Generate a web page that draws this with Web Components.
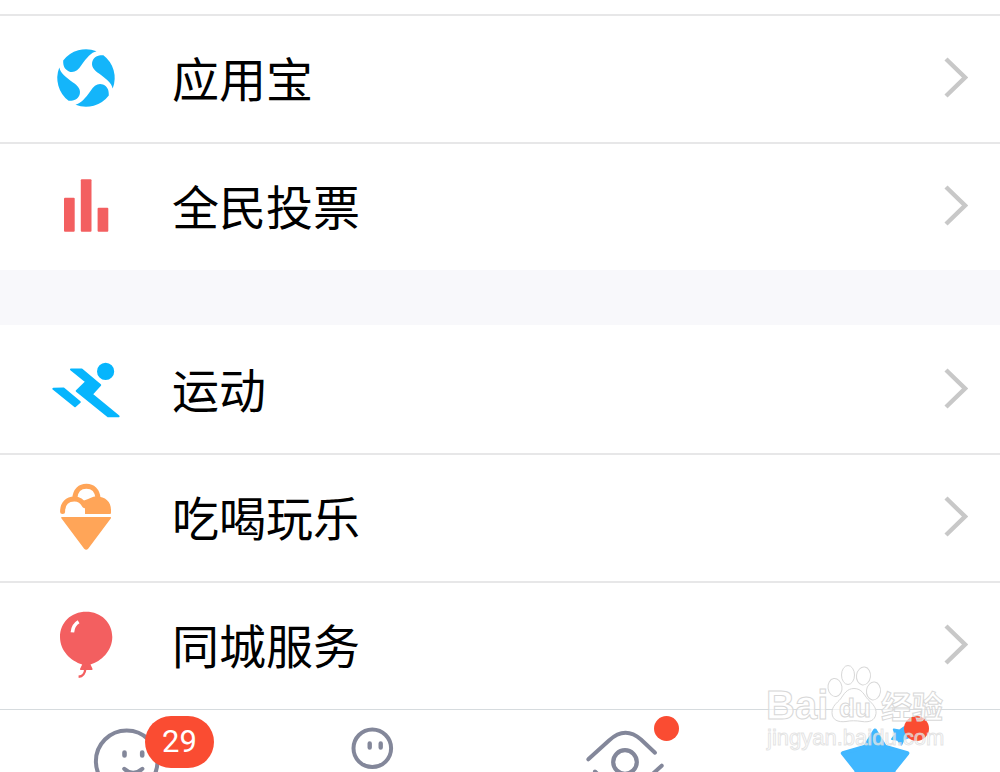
<!DOCTYPE html>
<html lang="zh-CN">
<head>
<meta charset="utf-8">
<meta name="viewport" content="width=device-width, initial-scale=1">
<title>动态</title>
<style>
  body {
    margin: 0;
    background: #fff;
    font-family: "Noto Sans CJK SC", sans-serif;
    color: #000;
  }
</style>
</head>
<body>
<feed-page>
  <menu-group>
    <menu-row>
      <svg slot="icon" viewBox="0 0 72 72" fill="#14b5fa">
        <defs><path id="blade" d="M-22.8 -17.4A28.7 28.7 0 0 1 10.5 -26.7C5 -25.5 1 -20.5 -4.5 -13C-8 -7.5 -12 -4.800 -17 -6.500C-21.500 -8.500 -23 -12 -22.800 -17.400Z"/></defs>
        <g transform="translate(36 36)">
          <use href="#blade"/>
          <use href="#blade" transform="rotate(90)"/>
          <use href="#blade" transform="rotate(180)"/>
          <use href="#blade" transform="rotate(270)"/>
        </g>
      </svg>
      应用宝
    </menu-row>
    <menu-row>
      <svg slot="icon" viewBox="0 0 72 72" fill="#f35f60">
        <rect x="14" y="27.7" width="10.7" height="34" rx="1"/>
        <rect x="30.8" y="9.3" width="10.7" height="52.4" rx="1"/>
        <rect x="47.6" y="37.7" width="10.7" height="24" rx="1"/>
      </svg>
      全民投票
    </menu-row>
  </menu-group>
  <menu-group>
    <menu-row>
      <svg slot="icon" viewBox="0 0 72 72" fill="#06b5fd" stroke="#06b5fd" stroke-width="2" stroke-linejoin="round">
        <circle cx="55.6" cy="18.4" r="7.6"/>
        <path d="M21 16.4H31.7L50.2 32.1L41.8 41.3L68.6 63.3H58L26.7 38L36.2 28.8Z"/>
        <path d="M3.3 35.8L13.6 35.4L29.8 49L25 53.3Z"/>
      </svg>
      运动
    </menu-row>
    <menu-row>
      <svg slot="icon" viewBox="0 0 72 72" fill="#ffa558">
        <path d="M12 36.7H60.3L37.5 67.2Q36.2 68.7 34.8 67.2Z" stroke="#ffa558" stroke-width="1.6" stroke-linejoin="round"/>
        <path d="M12.6 30.5C12.6 22.5 17.5 18 24.3 18C29 18 32.5 20.6 34.5 24.5" fill="none" stroke="#ffa558" stroke-width="5" stroke-linecap="round"/>
        <path d="M24.8 17C25.5 9.5 30 5.3 36.4 5.3C42.7 5.3 47.3 9.5 48 17" fill="none" stroke="#ffa558" stroke-width="5"/>
        <path d="M35 33V29C35 25.5 33.2 22.5 31.6 20.8C36 18.5 39 17.8 43.5 15.8C54 14.5 61 20 61 29V32Q61 33 60 33Z"/>
      </svg>
      吃喝玩乐
    </menu-row>
    <menu-row>
      <svg slot="icon" viewBox="0 0 72 72" fill="#f35f60">
        <path d="M36.2 2.7C51 2.7 62.3 13.5 62.3 28C62.3 42 51 52.5 40.5 55.5L42.6 60Q42.8 61 41.5 61H31Q29.7 61 30 60L32.2 55.5C21 52 10 42 10 28C10 13.5 21 2.7 36.2 2.7Z"/>
        <path d="M35.4 59.5C35 64.5 33 67.5 28.6 67.8" fill="none" stroke="#f35f60" stroke-width="2.4"/>
        <path d="M22.4 23.3C22.8 18.5 24.8 15 28.6 12.8" fill="none" stroke="#fff" stroke-width="3.6"/>
      </svg>
      同城服务
    </menu-row>
  </menu-group>

  <tab-bar slot="tabs">
    <tab-item label="消息" badge="29">
      <svg viewBox="0 0 120 100">
        <circle cx="61.7" cy="51.3" r="30.8"/>
        <path d="M59.5 42.5V45.5M77.2 42.5V45.5" stroke-width="4.6"/>
        <path d="M59.2 58.8Q68 67 77.4 58.8"/>
      </svg>
    </tab-item>
    <tab-item label="联系人">
      <svg viewBox="0 0 120 100">
        <circle cx="57.3" cy="38.3" r="18.8"/>
        <path d="M54.7 33.5V37.5M65.7 33.5V37.5" stroke-width="4.4"/>
      </svg>
    </tab-item>
    <tab-item label="看点" dot>
      <svg viewBox="0 0 120 100">
        <path d="M23.3 49.3L44 30.5Q60 15.5 76 29.5L90 42.7"/>
        <path d="M96.7 55.7L76 74.5Q60 89.5 44 75L30 61.5"/>
        <circle cx="60" cy="52" r="11.8" stroke-width="4.2"/>
      </svg>
    </tab-item>
    <tab-item label="动态" dot>
      <svg viewBox="0 0 120 100">
        <g fill="#40b7ff" stroke="#40b7ff" stroke-width="4" stroke-linejoin="round">
          <path d="M60 20.5L69.8 36.6L92.4 43.2L78.5 60.5L80 82L60 74L40 82L41.5 60.5L27.8 43.2L50.2 36.6Z"/>
          <path stroke-width="2" d="M78.8 19.5L84.5 20.5L89.5 17L89.7 23L94.5 27L88.7 29L86.3 34.5L82.7 29.7L77 29L80.5 24.5Z"/>
        </g>
      </svg>
    </tab-item>
  </tab-bar>

  <site-mark slot="mark"></site-mark>
</feed-page>

<script>
class FeedPage extends HTMLElement {
  constructor() {
    super();

    this.attachShadow({ mode: "open" });

    this.shadowRoot.innerHTML = `
        <style>
          :host {
            position: relative;
            display: flex;
            flex-direction: column;
            height: 100vh;
            overflow: hidden;
          }

          main {
            display: flex;
            flex-direction: column;
            gap: 55px;
            padding-top: 14px;
            background: linear-gradient(#fff 14px, #f8f8fb 14px);
          }
        </style>
        <main><slot></slot></main>
        <slot name="tabs"></slot>
        <slot name="mark"></slot>
      `;
  }
}

class MenuGroup extends HTMLElement {
  constructor() {
    super();

    this.attachShadow({ mode: "open" });

    this.shadowRoot.innerHTML = `
        <style>
          :host {
            display: block;
            background: #fff;
          }

          ::slotted(menu-row) {
            border-top: 2px solid #e7e7e8;
          }

          :host(:not(:first-of-type)) ::slotted(menu-row:first-child) {
            border-top-color: transparent;
          }
        </style>
        <slot></slot>
      `;
  }
}

class MenuRow extends HTMLElement {
  constructor() {
    super();

    this.attachShadow({ mode: "open" });

    this.shadowRoot.innerHTML = `
        <style>
          :host {
            display: block;
          }

          a {
            display: flex;
            align-items: center;
            gap: 50px;
            min-height: 124px;
            padding: 0 32px 2px 50px;
            color: inherit;
            text-decoration: none;
          }

          ::slotted(svg) {
            flex: none;
            width: 72px;
            height: 72px;
          }

          .label {
            flex: 1;
            padding-bottom: 2px;
            font-size: 47px;
            line-height: 72px;
          }

          .arrow {
            flex: none;
            width: 24px;
            height: 42px;
          }
        </style>
        <a href="#">
          <slot name="icon"></slot>
          <span class="label"><slot></slot></span>
          <svg class="arrow" viewBox="0 0 24 42" fill="none" stroke="#c8c8c8" stroke-width="4.4">
            <path d="M2 2L21 20.5L2 39"/>
          </svg>
        </a>
      `;
  }
}

class TabBar extends HTMLElement {
  constructor() {
    super();

    this.attachShadow({ mode: "open" });

    this.shadowRoot.innerHTML = `
        <style>
          :host {
            flex: 1;
            min-height: 0;
            overflow: hidden;
            border-top: 1px solid #d6dbde;
            background: #fff;
          }

          nav {
            display: flex;
          }

          ::slotted(tab-item) {
            flex: 1;
          }
        </style>
        <nav><slot></slot></nav>
      `;
  }
}

class TabItem extends HTMLElement {
  constructor() {
    super();

    this.attachShadow({ mode: "open" });

    const badge = this.getAttribute("badge");
    let mark = "";
    if (badge) mark = `<span class="badge">${badge}</span>`;
    else if (this.hasAttribute("dot")) mark = `<span class="dot"></span>`;

    this.shadowRoot.innerHTML = `
        <style>
          :host {
            display: block;
          }

          button {
            position: relative;
            display: flex;
            justify-content: center;
            width: 100%;
            padding: 0;
            border: 0;
            background: none;
          }

          ::slotted(svg) {
            width: 120px;
            height: 100px;
            fill: none;
            stroke: #83879a;
            stroke-width: 4px;
            stroke-linecap: round;
          }

          .badge,
          .dot {
            position: absolute;
            top: 6px;
            background: #fa4c32;
          }

          .badge {
            left: calc(50% + 20px);
            width: 69px;
            border-radius: 26px;
            font: 31px/52px Roboto, sans-serif;
            color: #fff;
          }

          .dot {
            left: calc(50% + 29px);
            width: 25px;
            height: 25px;
            border-radius: 50%;
          }
        </style>
        <button type="button" aria-label="${this.getAttribute("label")}">
          <slot></slot>
          ${mark}
        </button>
      `;
  }
}

class SiteMark extends HTMLElement {
  constructor() {
    super();

    this.attachShadow({ mode: "open" });

    this.shadowRoot.innerHTML = `
        <style>
          :host {
            position: absolute;
            right: 40px;
            bottom: 0;
            pointer-events: none;
          }

          svg {
            display: block;
            width: 210px;
            height: 117px;
            fill: #fff;
            fill-opacity: 0.6;
            stroke: #d8d8d8;
            stroke-width: 1px;
          }

          text {
            font-family: "Liberation Sans", "Noto Sans CJK SC", sans-serif;
            font-weight: 700;
          }

          .site {
            font-family: "Liberation Sans", sans-serif;
            font-weight: 400;
            font-size: 22px;
            stroke: #d8d8d8;
            stroke-opacity: 0.7;
          }
        </style>
        <svg viewBox="0 0 210 117">
          <ellipse cx="98" cy="20" rx="6.5" ry="9.5"/>
          <ellipse cx="113.5" cy="21" rx="7" ry="9" transform="rotate(8 113.5 21)"/>
          <ellipse cx="85" cy="32.5" rx="7" ry="9" transform="rotate(-8 85 32.5)"/>
          <ellipse cx="123.5" cy="36" rx="7" ry="9" transform="rotate(8 123.5 36)"/>
          <path d="M104 33.5C112 33.5 114 40 118 44.5C123 49 126.5 53 126 58.5C125 66 119 67.5 112 66.5C106 65.5 101 65.5 96 66.5C88 67.5 82 65 82 57.5C82 51 87 48 90.5 44C94 39 97 33.5 104 33.5Z"/>
          <text x="16" y="64" font-size="40">Bai</text>
          <text x="89" y="62" font-size="26">du</text>
          <text x="131" y="63" font-size="31">经验</text>
          <text class="site" x="17" y="90">jingyan.baidu.com</text>
        </svg>
      `;
  }
}

customElements.define("feed-page", FeedPage);
customElements.define("menu-group", MenuGroup);
customElements.define("menu-row", MenuRow);
customElements.define("tab-bar", TabBar);
customElements.define("tab-item", TabItem);
customElements.define("site-mark", SiteMark);
</script>
</body>
</html>
